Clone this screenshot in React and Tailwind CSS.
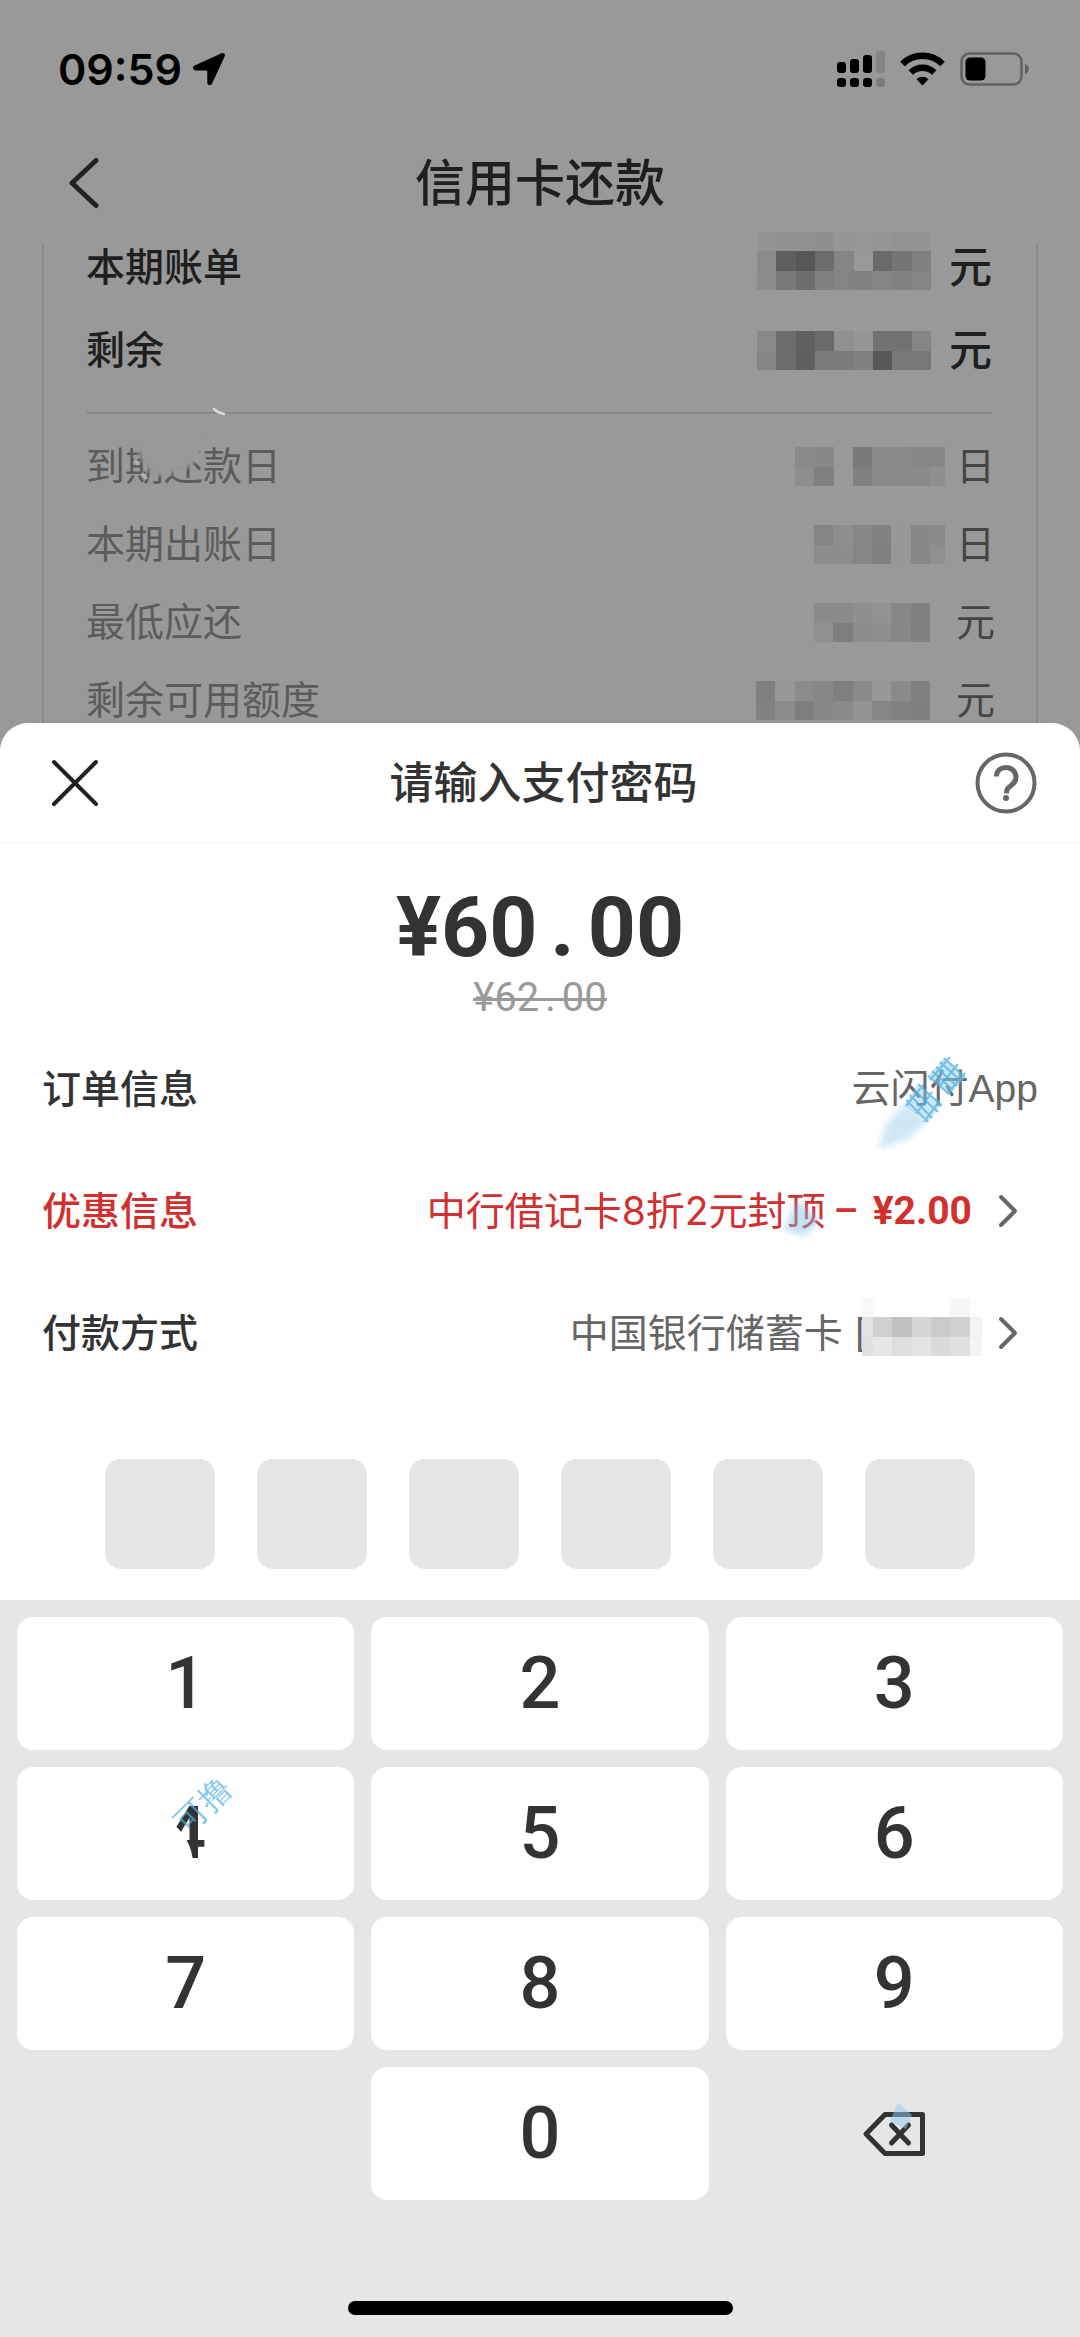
import { useState } from 'react';

const bills = [
    {
        label: '本期账单',
        unit: '元',
        strong: true,
        width: 174,
        cells: [
            ['94', '90', '90', '8f', '96', '98', '95', '93', '94'],
            ['8b', '5f', '57', '6c', '85', '99', '6a', '75', '80'],
            ['8c', '78', '6e', '7f', '84', '82', '84', '82', '84'],
        ],
    },
    {
        label: '剩余',
        unit: '元',
        strong: true,
        width: 174,
        cells: [
            ['89', '6d', '61', '6a', '90', '96', '72', '72', '85'],
            ['84', '6d', '60', '7c', '7c', '80', '58', '78', '78'],
        ],
    },
];

const details = [
    {
        label: '到期还款日',
        unit: '日',
        width: 150,
        smudged: true,
        cells: [
            ['8a', '88', '99', '7a', '89', '89', '87', '87'],
            ['8e', '80', '99', '80', '8a', '8a', '8a', '8f'],
        ],
    },
    {
        label: '本期出账日',
        unit: '日',
        width: 131,
        cells: [
            ['84', '8e', '86', '82', '98', '88', '8a'],
            ['8c', '8d', '86', '80', '98', '88', '90'],
        ],
    },
    {
        label: '最低应还',
        unit: '元',
        width: 116,
        cells: [
            ['8a', '8a', '8f', '92', '87', '80'],
            ['90', '7e', '8c', '8e', '88', '7f'],
        ],
    },
    {
        label: '剩余可用额度',
        unit: '元',
        width: 174,
        cells: [
            ['80', '98', '8b', '88', '7f', '8a', '98', '8a', '80'],
            ['82', '8c', '7e', '86', '8a', '93', '86', '82', '7e'],
        ],
    },
];

const cardCells = [
    ['f8', 'ff', 'ff', 'ff', 'ff', 'f6', 'fd'],
    ['e4', 'd0', 'c0', 'd6', 'cb', 'd0', 'f3'],
    ['e0', 'e6', 'de', 'e4', 'da', 'e0', 'f5'],
];

// Hidden values are drawn as a grid of grey squares, 58 units each at a third of the size
function Mosaic({ cells, width, offset = 0, className }) {
    const height = Math.round((cells.length * 58) / 3);
    return (
        <svg
            width={width}
            height={height}
            viewBox={`${offset} 0 ${width * 3} ${cells.length * 58}`}
            preserveAspectRatio="none"
            shapeRendering="crispEdges"
            className={className}
            aria-hidden="true"
        >
            {cells.map((row, y) =>
                row.map((c, x) => (
                    <rect key={`${x}-${y}`} x={x * 58} y={y * 58} width="58" height="58" fill={`#${c}${c}${c}`} />
                ))
            )}
        </svg>
    );
}

function StatusBar() {
    return (
        <div className="flex h-[138px] items-center justify-between pl-[58px] pr-[50px]">
            <div className="flex items-center gap-[10px] font-['Inter',sans-serif] text-[43px] font-semibold leading-[44px] text-black">
                <span>09:59</span>
                <svg width="34" height="34" viewBox="0 0 34 34" fill="currentColor">
                    <path d="M29.6 1.2 2.6 13.6C.2 14.8.6 18.4 3.4 18.4H14.4c.6 0 .9.3.9.9V30.6c0 2.9 3.6 3.5 4.8 1L32.6 4.4C33.6 2 31.9.2 29.6 1.2Z" />
                </svg>
            </div>
            <div className="flex items-center gap-[15px]">
                <svg width="48" height="36" viewBox="0 0 48 36">
                    <g fill="#000">
                        <rect x="0" y="11" width="9" height="11" rx="3" />
                        <rect x="13" y="8" width="9" height="14" rx="3" />
                        <rect x="26" y="4" width="9" height="18" rx="3" />
                        <rect x="0" y="27" width="9" height="9" rx="3" />
                        <rect x="13" y="27" width="9" height="9" rx="3" />
                        <rect x="26" y="27" width="9" height="9" rx="3" />
                    </g>
                    <rect x="39" y="0" width="9" height="22" rx="3" fill="#858585" />
                    <rect x="39" y="27" width="9" height="9" rx="3" fill="#7c7c7c" />
                </svg>
                <svg width="45" height="34" viewBox="0 0 45 34">
                    <g fill="none" stroke="#000" strokeWidth="6.5">
                        <path d="M2.5 12A28.5 28.5 0 0 1 42.5 12" />
                        <path d="M10.8 20.5A17 17 0 0 1 34.2 20.5" />
                    </g>
                    <path d="M22.5 33.5 16.5 27.2a8.6 8.6 0 0 1 12 0Z" />
                </svg>
                <svg width="70" height="34" viewBox="0 0 70 34">
                    <rect x="1.5" y="1.5" width="60" height="31" rx="8" fill="none" stroke="#616161" strokeWidth="2.5" />
                    <rect x="5.5" y="5.5" width="20" height="23" rx="4.5" />
                    <path d="M65 12c5 1 5 9 0 10Z" fill="#616161" />
                </svg>
            </div>
        </div>
    );
}

function BillRow({ label, unit, strong, smudged, width, cells }) {
    return (
        <li className="relative flex h-[46px] items-center">
            <span className={strong ? 'font-medium text-[#1f1f1f]' : 'text-[#5c5c5c]'}>{label}</span>
            {smudged && (
                <svg className="absolute left-[36px] -top-[34px]" width="96" height="80" viewBox="0 0 96 80" aria-hidden="true">
                    <defs>
                        <filter id="smudge" x="-20%" y="-20%" width="140%" height="140%">
                            <feGaussianBlur stdDeviation="2" />
                        </filter>
                    </defs>
                    <path d="M10 30H80Q80 50 68 57T40 67Q26 66 20 50Z" fill="#999" filter="url(#smudge)" />
                    <path d="M13 50 16 56M20 64 25 70" stroke="#bdbdbd" strokeWidth="3" fill="none" opacity="0.7" />
                </svg>
            )}
            <Mosaic cells={cells} width={width} className={cells.length > 2 ? 'ml-auto self-end' : 'ml-auto'} />
            {strong ? (
                <span className="ml-[18px] text-[43px] font-medium text-[#1f1f1f]">{unit}</span>
            ) : (
                <span className={unit === '日' ? 'ml-[11px] text-[#454545]' : 'ml-[26px] text-[#454545]'}>{unit}</span>
            )}
        </li>
    );
}

function Chevron() {
    return (
        <svg width="20" height="34" viewBox="0 0 20 34" fill="none" stroke="#666" strokeWidth="4" strokeLinecap="round" strokeLinejoin="round">
            <path d="M3 3 17 17 3 31" />
        </svg>
    );
}

function Key({ value, onPress }) {
    return (
        <button
            type="button"
            onClick={() => onPress(value)}
            className="relative h-[133px] overflow-hidden rounded-[16px] bg-white font-['Roboto',sans-serif] text-[72px] font-medium text-[#333]"
        >
            {value}
            {value === '4' && (
                <>
                    <svg className="pointer-events-none absolute left-0 top-0" width="338" height="133" viewBox="0 0 338 133">
                        <circle cx="124" cy="98" r="52" fill="#fdfefe" />
                    </svg>
                    <span className="pointer-events-none absolute left-[154px] top-[22px] -rotate-45 whitespace-nowrap text-[32px] font-normal leading-[32px] text-[#4fb0e4]/70">
                        可撸
                    </span>
                </>
            )}
        </button>
    );
}

export default function App() {
    const [pin, setPin] = useState('');

    const press = (digit) => setPin((p) => (p.length < 6 ? p + digit : p));
    const erase = () => setPin((p) => p.slice(0, -1));

    return (
        <div className="flex min-h-screen w-full flex-col bg-[#999] font-['Inter','Noto_Sans_CJK_SC',sans-serif] text-[39px] leading-[46px]">
            <StatusBar />

            <header className="grid h-[90px] grid-cols-[160px_1fr_160px] items-center">
                <button type="button" aria-label="返回" className="pl-[68px]">
                    <svg width="31" height="52" viewBox="0 0 31 52" fill="none" stroke="#222" strokeWidth="5" strokeLinecap="round" strokeLinejoin="round">
                        <path d="M28 3.5 4 26 28 48.5" />
                    </svg>
                </button>
                <h1 className="text-center text-[50px] font-medium leading-[60px] text-[#1f1f1f]">信用卡还款</h1>
            </header>

            {/* Bill card, its lower part runs under the sheet */}
            <main className="mx-[42px] mt-4 border-x-2 border-[#8b8b8b] pl-[42px] pr-[44px]">
                <ul className="flex flex-col gap-[37px]">
                    {bills.map((b) => (
                        <BillRow key={b.label} {...b} />
                    ))}
                </ul>
                <div className="relative mt-[39px] h-[2px] bg-[#8b8b8b]">
                    <svg className="absolute -top-[5px] left-[126px]" width="14" height="10" viewBox="0 0 14 10">
                        <path d="M2 2Q6 6 12 7" stroke="#d8d8d8" strokeWidth="2.5" fill="none" strokeLinecap="round" />
                    </svg>
                </div>
                <ul className="-mr-[3px] mt-[29px] flex flex-col gap-8">
                    {details.map((d) => (
                        <BillRow key={d.label} {...d} />
                    ))}
                </ul>
            </main>

            {/* Payment sheet */}
            <section className="flex grow flex-col overflow-hidden rounded-t-[28px] bg-white">
                <div className="grid h-[121px] grid-cols-[1fr_auto_1fr] items-center border-b-2 border-[#f7f7f7] pl-[50px] pr-[43px]">
                    <button type="button" aria-label="关闭" className="justify-self-start">
                        <svg width="50" height="50" viewBox="0 0 50 50" stroke="#222" strokeWidth="4" strokeLinecap="round">
                            <path d="M4 4 46 46M46 4 4 46" />
                        </svg>
                    </button>
                    <h2 className="text-[44px] font-medium leading-[60px] text-[#333]">请输入支付密码</h2>
                    <button type="button" aria-label="帮助" className="justify-self-end">
                        <svg width="62" height="62" viewBox="0 0 62 62" fill="none" stroke="#666">
                            <circle cx="31" cy="31" r="28.5" strokeWidth="4" />
                            <path d="M21.5 24.5C21.5 18 26 15.500 31 15.500s10 3.500 10 9.500c0 4.500-2.500 6.500-5.500 9-3 2.300-4 3.500-4 7.500" strokeWidth="5" />
                            <circle cx="31" cy="46" r="3" fill="#666" stroke="none" />
                        </svg>
                    </button>
                </div>

                <div className="flex flex-col items-center gap-[10px] pt-[44px] font-['Roboto',sans-serif]">
                    <p className="text-[84px] font-bold leading-[80px] text-[#333]">
                        ¥60<span className="px-[13px]">.</span>00
                    </p>
                    <p className="relative text-[40px] leading-[40px] text-[#999]">
                        ¥62<span className="px-[6px]">.</span>00
                        <span className="absolute inset-x-0 top-1/2 h-[3px] bg-[#999]" />
                    </p>
                </div>

                <dl className="mt-[10px] px-[42px] text-[#666]">
                    <div className="flex h-[122px] items-center justify-between">
                        <dt className="font-medium text-[#333]">订单信息</dt>
                        <dd className="relative font-['Liberation_Sans','Noto_Sans_CJK_SC',sans-serif]">
                            云闪付App
                            <svg className="pointer-events-none absolute left-0 -top-[16px]" width="130" height="116" viewBox="0 0 130 116" fill="none" aria-hidden="true">
                                <defs>
                                    <filter id="soft" x="-30%" y="-30%" width="160%" height="160%">
                                        <feGaussianBlur stdDeviation="3" />
                                    </filter>
                                </defs>
                                <path d="M92 8 113 28 98 44 76 26Z" fill="#8fcdec" opacity="0.5" />
                                <path d="M66 34 90 54 76 72 52 56Z" fill="#8fcdec" opacity="0.45" />
                                <g stroke="#4fb0e0" strokeWidth="2" opacity="0.75">
                                    <path d="M92 8 113 27M88 12 109 31M84 17 105 36M80 21 101 40M76 26 97 44M98 7 78 30M106 14 88 36M113 23 95 44" />
                                    <path d="M66 34 90 56M62 40 86 62M58 45 80 68M54 50 76 72M72 34 54 56M80 42 64 64M88 50 72 72" />
                                </g>
                                <path d="M52 54 76 70 58 88 26 100 34 74Z" fill="#9fd3ee" opacity="0.5" filter="url(#soft)" />
                            </svg>
                        </dd>
                    </div>
                    <div className="flex h-[122px] items-center justify-between">
                        <dt className="font-medium text-[#d2302f]">优惠信息</dt>
                        <dd className="mr-5">
                            <button type="button" className="relative flex items-center text-[#d2302f]">
                                <span>中行借记卡8折2元封顶</span>
                                <span className="ml-[8px] font-['Roboto',sans-serif] font-medium">–</span>
                                <span className="ml-[14px] font-['Roboto',sans-serif] font-bold">¥2.00</span>
                                <svg className="pointer-events-none absolute left-[350px] top-[8px]" width="48" height="44" viewBox="0 0 48 44" aria-hidden="true">
                                    <path d="M20 4 44 24 28 40 6 34Z" fill="#7cc0ea" opacity="0.45" filter="url(#soft)" />
                                </svg>
                                <span className="ml-[26px]">
                                    <Chevron />
                                </span>
                            </button>
                        </dd>
                    </div>
                    <div className="flex h-[122px] items-center justify-between">
                        <dt className="font-medium text-[#333]">付款方式</dt>
                        <dd className="mr-5">
                            <button type="button" className="flex items-center">
                                <span>中国银行储蓄卡 [</span>
                                <Mosaic cells={cardCells} width={120} offset={25} className="-ml-[6px] mb-3" />
                                <span className="ml-4">
                                    <Chevron />
                                </span>
                            </button>
                        </dd>
                    </div>
                </dl>

                <div className="flex justify-center gap-[42px] pb-[31px] pt-[65px]">
                    {[0, 1, 2, 3, 4, 5].map((i) => (
                        <input
                            key={i}
                            type="password"
                            aria-label={`密码第${i + 1}位`}
                            readOnly
                            value={pin[i] || ''}
                            className="h-[110px] w-[110px] rounded-[16px] bg-[#e6e6e6] text-center text-[#333] outline-none"
                        />
                    ))}
                </div>

                {/* Keypad */}
                <div className="flex grow flex-col bg-[#e6e6e6] px-[17px] pb-[22px] pt-[17px]">
                    <div className="grid grid-cols-3 gap-[17px]">
                        {['1', '2', '3', '4', '5', '6', '7', '8', '9'].map((n) => (
                            <Key key={n} value={n} onPress={press} />
                        ))}
                        <span />
                        <Key value="0" onPress={press} />
                        <button type="button" aria-label="删除" onClick={erase} className="flex items-center justify-center">
                            <svg width="64" height="46" viewBox="0 0 64 46" fill="none" stroke="#333" strokeWidth="5" strokeLinejoin="round" strokeLinecap="round" className="overflow-visible">
                                <path d="M23 3.5H60.5V42.5H23L4 23Z" />
                                <path d="M29.5 14 46.5 32M46.5 14 29.5 32" />
                                <path d="M36 -8 50 4 44 18 28 10Z" fill="#8ecbf0" stroke="none" opacity="0.5" />
                            </svg>
                        </button>
                    </div>
                    <div className="mx-auto mt-auto h-[14px] w-[385px] rounded-full bg-black" />
                </div>
            </section>
        </div>
    );
}
